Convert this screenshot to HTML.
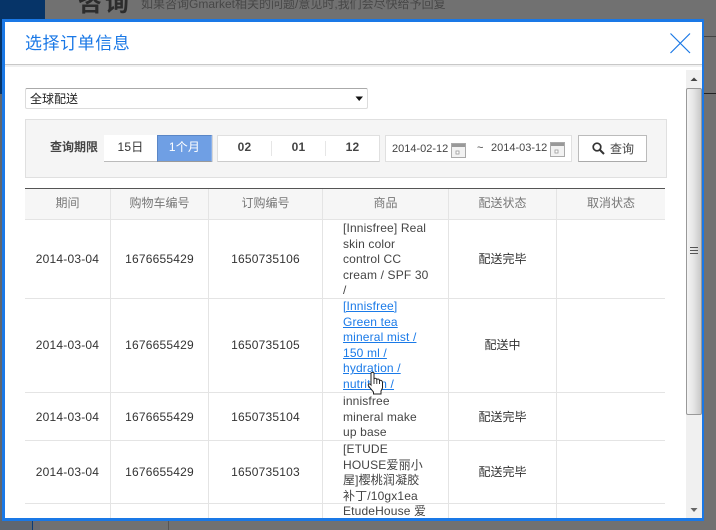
<!DOCTYPE html>
<html><head><meta charset="utf-8">
<style>
html,body{margin:0;padding:0}
body{width:716px;height:530px;overflow:hidden;position:relative;background:#717171;font-family:"Liberation Sans","WenQuanYi Zen Hei","Noto Sans CJK SC",sans-serif;font-size:12px;color:#333}
.a{position:absolute}
.t{position:absolute;white-space:nowrap;line-height:16px}
.c{position:absolute;white-space:nowrap;line-height:16px;text-align:center;letter-spacing:.2px}
.h{background:#e4e4e4;position:absolute}
.p{position:absolute;left:343px;white-space:nowrap;line-height:15.6px;color:#444;letter-spacing:.15px}
a{color:#1a7ae8;text-decoration:underline}
</style></head><body>
<div class="a" style="left:0;top:0;width:45px;height:94px;background:#063468"></div>
<div class="a" style="left:0;top:94px;width:32px;height:436px;background:#5f6670"></div>
<div class="a" style="left:32px;top:94px;width:1px;height:436px;background:#0a3a78"></div>
<div class="a" style="left:33px;top:94px;width:7px;height:436px;background:#6a6a70"></div>
<div class="a" style="left:168px;top:520px;width:1px;height:10px;background:#555"></div>
<div class="a" style="left:704px;top:36px;width:12px;height:1px;background:#444"></div>
<div class="a" style="left:704px;top:93px;width:12px;height:1px;background:#222"></div>
<div class="t" style="left:78px;top:-8px;font-size:24px;line-height:24px;font-weight:bold;color:#2c2c2c;letter-spacing:3px">咨询</div>
<div class="t" style="left:141px;top:-4px;color:#474747;font-size:12px">如果咨询Gmarket相关的问题/意见时,我们会尽快给予回复</div>

<div class="a" style="left:2px;top:19px;border:solid #1a78e6;border-width:3px 2px 3px 3px;background:#fff;box-sizing:content-box;width:697px;height:496px"></div>

<div class="t" style="left:25px;top:34px;font-size:17px;line-height:20px;color:#1a78e6;letter-spacing:.55px">选择订单信息</div>
<svg class="a" style="left:670px;top:33px" width="21" height="21" viewBox="0 0 21 21"><path d="M0.5 0.5L20 20M20 0.5L0.5 20" stroke="#1a78e6" stroke-width="1.2" fill="none"/></svg>
<div class="a" style="left:5px;top:64px;width:697px;height:1px;background:#c8c8c8"></div>
<div class="a" style="left:5px;top:65px;width:697px;height:2px;background:#f0f0f0"></div>

<!-- scrollbar -->
<div class="a" style="left:686px;top:70px;width:16px;height:448px;background:#f0f0f0"></div>
<svg class="a" style="left:686px;top:70px" width="16" height="18"><path d="M4.5 11L8 7.5L11.5 11Z" fill="#444"/></svg>
<svg class="a" style="left:686px;top:503px" width="16" height="15"><path d="M4.5 5L8 9L11.5 5Z" fill="#666"/></svg>
<div class="a" style="left:686px;top:88px;width:16px;height:327px;box-sizing:border-box;border:1px solid #999;border-radius:2px;background:linear-gradient(90deg,#f4f4f4,#e6e6e6 45%,#c9c9c9)"></div>
<div class="a" style="left:690px;top:247px;width:8px;height:1px;background:#555"></div>
<div class="a" style="left:690px;top:250px;width:8px;height:1px;background:#555"></div>
<div class="a" style="left:690px;top:253px;width:8px;height:1px;background:#555"></div>

<!-- select -->
<div class="a" style="left:25px;top:88px;width:343px;height:21px;box-sizing:border-box;border:1px solid #dcdcdc;border-top-color:#aaa;border-radius:2px;background:#fff"></div>
<div class="t" style="left:30px;top:91px;color:#222">全球配送</div>
<svg class="a" style="left:355px;top:96px" width="9" height="6"><path d="M0.5 0.5H8L4.2 5Z" fill="#111"/></svg>

<!-- filter -->
<div class="a" style="left:25px;top:119px;width:642px;height:59px;box-sizing:border-box;border:1px solid #e0e0e0;background:#f5f5f5"></div>
<div class="t" style="left:50px;top:139px;font-weight:bold;color:#444">查询期限</div>
<div class="a" style="left:104px;top:135px;width:53px;height:27px;box-sizing:border-box;background:#fff;border-bottom:1px solid #bbb"></div>
<div class="c" style="left:104px;top:139px;width:53px">15日</div>
<div class="a" style="left:157px;top:135px;width:55px;height:27px;box-sizing:border-box;background:#6f9fe4;border:1px solid #5a86c6;border-right:1px solid #8db2ea;border-bottom-color:#9a9a9a"></div>
<div class="c" style="left:157px;top:139px;width:55px;color:#fff">1个月</div>
<div class="a" style="left:212px;top:135px;width:1px;height:27px;background:#d6d6d6"></div>
<div class="a" style="left:217px;top:135px;width:163px;height:27px;box-sizing:border-box;background:#fff;border:1px solid #e0e0e0;border-bottom-color:#ccc"></div>
<div class="a" style="left:271px;top:141px;width:1px;height:15px;background:#e6e6e6"></div>
<div class="a" style="left:325px;top:141px;width:1px;height:15px;background:#e6e6e6"></div>
<div class="c" style="left:218px;top:139px;width:53px;font-weight:bold;color:#444">02</div>
<div class="c" style="left:272px;top:139px;width:53px;font-weight:bold;color:#444">01</div>
<div class="c" style="left:326px;top:139px;width:53px;font-weight:bold;color:#444">12</div>
<div class="a" style="left:385px;top:135px;width:187px;height:27px;box-sizing:border-box;background:#fff;border:1px solid #e0e0e0"></div>
<div class="t" style="left:392px;top:141px;font-size:11px;color:#444">2014-02-12</div>
<div class="t" style="left:477px;top:140px;font-size:11px;color:#444">~</div>
<div class="t" style="left:491px;top:140px;font-size:11px;color:#444">2014-03-12</div>
<svg class="a" style="left:451px;top:143px" width="16" height="15"><rect x=".5" y=".5" width="14" height="14" fill="#f2f2f2" stroke="#aaa"/><rect x="1" y="1" width="13" height="3" fill="#999"/><rect x="5" y="8" width="3" height="3" fill="#fff" stroke="#999" stroke-width=".8"/></svg>
<svg class="a" style="left:550px;top:142px" width="16" height="15"><rect x=".5" y=".5" width="14" height="14" fill="#f2f2f2" stroke="#aaa"/><rect x="1" y="1" width="13" height="3" fill="#999"/><rect x="5" y="8" width="3" height="3" fill="#fff" stroke="#999" stroke-width=".8"/></svg>
<div class="a" style="left:578px;top:135px;width:69px;height:27px;box-sizing:border-box;background:#fff;border:1px solid #bbb;border-bottom-color:#aaa"></div>
<svg class="a" style="left:592px;top:142px" width="13" height="13"><circle cx="5" cy="5" r="3.8" fill="none" stroke="#333" stroke-width="1.7"/><path d="M8 8L12 12" stroke="#333" stroke-width="2"/></svg>
<div class="t" style="left:610px;top:141px;color:#444">查询</div>

<!-- table -->
<div class="a" style="left:25px;top:188px;width:640px;height:31px;background:#f6f6f6"></div>
<div class="a" style="left:25px;top:188px;width:640px;height:1px;background:#555"></div>
<div class="h" style="left:25px;top:219px;width:640px;height:1px"></div>
<div class="h" style="left:25px;top:298px;width:640px;height:1px"></div>
<div class="h" style="left:25px;top:392px;width:640px;height:1px"></div>
<div class="h" style="left:25px;top:440px;width:640px;height:1px"></div>
<div class="h" style="left:25px;top:503px;width:640px;height:1px"></div>
<div class="h" style="left:110px;top:189px;width:1px;height:329px"></div>
<div class="h" style="left:208px;top:189px;width:1px;height:329px"></div>
<div class="h" style="left:322px;top:189px;width:1px;height:329px"></div>
<div class="h" style="left:448px;top:189px;width:1px;height:329px"></div>
<div class="h" style="left:556px;top:189px;width:1px;height:329px"></div>

<div class="c" style="left:25px;top:195px;width:85px;color:#777;letter-spacing:0">期间</div>
<div class="c" style="left:111px;top:195px;width:97px;color:#777;letter-spacing:0">购物车编号</div>
<div class="c" style="left:209px;top:195px;width:113px;color:#777;letter-spacing:0">订购编号</div>
<div class="c" style="left:323px;top:195px;width:125px;color:#777;letter-spacing:0">商品</div>
<div class="c" style="left:449px;top:195px;width:107px;color:#777;letter-spacing:0">配送状态</div>
<div class="c" style="left:557px;top:195px;width:108px;color:#777;letter-spacing:0">取消状态</div>

<div class="c" style="left:25px;top:251px;width:85px">2014-03-04</div>
<div class="c" style="left:111px;top:251px;width:97px">1676655429</div>
<div class="c" style="left:209px;top:251px;width:113px">1650735106</div>
<div class="c" style="left:449px;top:251px;width:107px;letter-spacing:0">配送完毕</div>
<div class="c" style="left:25px;top:337px;width:85px">2014-03-04</div>
<div class="c" style="left:111px;top:337px;width:97px">1676655429</div>
<div class="c" style="left:209px;top:337px;width:113px">1650735105</div>
<div class="c" style="left:449px;top:337px;width:107px;letter-spacing:0">配送中</div>
<div class="c" style="left:25px;top:409px;width:85px">2014-03-04</div>
<div class="c" style="left:111px;top:409px;width:97px">1676655429</div>
<div class="c" style="left:209px;top:409px;width:113px">1650735104</div>
<div class="c" style="left:449px;top:409px;width:107px;letter-spacing:0">配送完毕</div>
<div class="c" style="left:25px;top:464px;width:85px">2014-03-04</div>
<div class="c" style="left:111px;top:464px;width:97px">1676655429</div>
<div class="c" style="left:209px;top:464px;width:113px">1650735103</div>
<div class="c" style="left:449px;top:464px;width:107px;letter-spacing:0">配送完毕</div>

<div class="p" style="top:221px">[Innisfree] Real<br>skin color<br>control CC<br>cream / SPF 30<br>/</div>
<div class="p" style="top:299px"><a>[Innisfree]</a><br><a>Green tea</a><br><a>mineral mist /</a><br><a>150 ml /</a><br><a>hydration /</a><br><a>nutrition /</a></div>
<div class="p" style="top:394px">innisfree<br>mineral make<br>up base</div>
<div class="p" style="top:442px">[ETUDE<br>HOUSE爱丽小<br>屋]樱桃润凝胶<br>补丁/10gx1ea</div>
<div class="p" style="top:504px;height:14px;overflow:hidden">EtudeHouse 爱</div>

<svg class="a" style="left:366px;top:371px" width="19" height="25" viewBox="0 0 19 25"><path d="M5 2.5C5 1 8 1 8 2.5L8 8C8.5 7 10.5 7 10.8 8.5C11.5 7.5 13.5 8 13.5 9.5C14.5 9 16.5 9.5 16.5 11.5V17L15 20V23H7.5V21L2.5 15C1.5 13 3.5 12 5 14Z" fill="#fff" stroke="#222" stroke-width="1"/><path d="M8 8V13M10.8 8.5V13M13.5 9.5V13" stroke="#222" stroke-width=".9" fill="none"/></svg>
</body></html>
